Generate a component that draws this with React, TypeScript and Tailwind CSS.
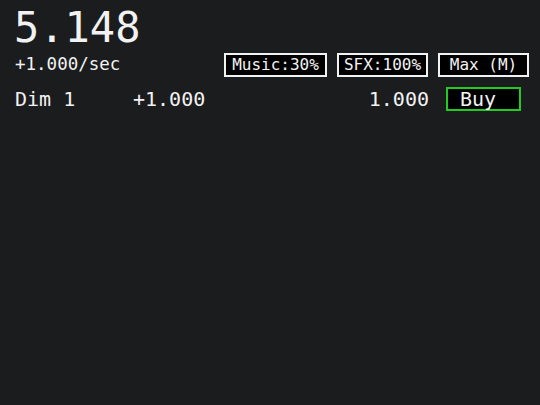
import React from "react";

const mono = { fontFamily: '"DejaVu Sans Mono", "Liberation Mono", monospace' };

export default function App() {
  return (
    <div className="w-[540px] h-[405px] bg-[#1b1c1e] text-[#f2f2f2] overflow-hidden" style={mono}>
      <div className="pl-[14px] pt-[7px] text-[42px] leading-[42px] h-[49px]">5.148</div>
      <div className="flex items-center pl-[15px] pr-[11px] h-[24px] mt-[4px]">
        <div className="text-[17.5px] leading-none flex-1">+1.000/sec</div>
        <div className="flex gap-[10px]">
          <div className="w-[103px] h-[24px] bg-black border-2 border-[#f2f2f2] flex items-center justify-center text-[16px] leading-none">
            Music:30%
          </div>
          <div className="w-[91px] h-[24px] bg-black border-2 border-[#f2f2f2] flex items-center justify-center text-[16px] leading-none">
            SFX:100%
          </div>
          <div className="w-[91px] h-[24px] bg-black border-2 border-[#f2f2f2] flex items-center justify-center text-[16px] leading-none">
            Max (M)
          </div>
        </div>
      </div>
      <div className="flex items-center h-[24px] mt-[10px] text-[20px] leading-none">
        <div className="pl-[15px] w-[133px]">Dim 1</div>
        <div className="flex-1">+1.000</div>
        <div className="mr-[17px]">1.000</div>
        <div className="w-[75px] h-[24px] bg-black border-2 border-[#1fcc1f] flex items-center pl-[12px] mr-[19px]">
          Buy
        </div>
      </div>
    </div>
  );
}
